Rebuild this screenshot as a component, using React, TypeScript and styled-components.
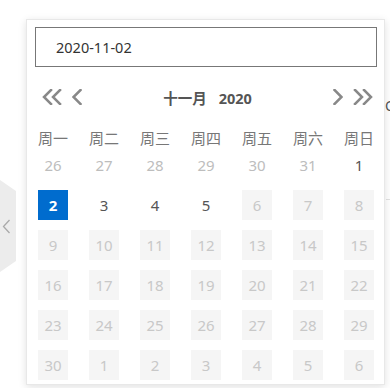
import React from 'react';
import styled, { createGlobalStyle } from 'styled-components';

const GlobalStyle = createGlobalStyle`
  html, body {
    margin: 0;
    padding: 0;
    background: #fff;
  }
  body {
    font-family: "Noto Sans", "Noto Sans CJK SC", sans-serif;
  }
`;

type DayKind = 'other' | 'normal' | 'selected' | 'disabled';

const weekDays = ['周一', '周二', '周三', '周四', '周五', '周六', '周日'];

const buildDays = () => {
  const days: { label: number; kind: DayKind }[] = [];
  [26, 27, 28, 29, 30, 31].forEach((d) => days.push({ label: d, kind: 'other' }));
  days.push({ label: 1, kind: 'normal' });
  days.push({ label: 2, kind: 'selected' });
  [3, 4, 5].forEach((d) => days.push({ label: d, kind: 'normal' }));
  for (let d = 6; d <= 30; d++) days.push({ label: d, kind: 'disabled' });
  for (let d = 1; d <= 6; d++) days.push({ label: d, kind: 'disabled' });
  return days;
};

const Chevron = ({ dir, double }: { dir: 'left' | 'right'; double?: boolean }) => {
  const w = double ? 21 : 10;
  const paths =
    dir === 'left'
      ? double
        ? ['M9 1 L2 8 L9 15', 'M18 1 L11 8 L18 15']
        : ['M8.5 1 L1.5 8 L8.5 15']
      : double
      ? ['M3 1 L10 8 L3 15', 'M12 1 L19 8 L12 15']
      : ['M1.5 1 L8.5 8 L1.5 15'];
  return (
    <svg width={w} height={16} viewBox={`0 0 ${w} 16`} fill="none">
      {paths.map((d) => (
        <path key={d} d={d} stroke="#888" strokeWidth={2.5} strokeLinecap="square" />
      ))}
    </svg>
  );
};

const App = () => {
  const days = buildDays();

  return (
    <Page>
      <GlobalStyle />
      <Backdrop>
        <SideArrow>
          <svg width="9" height="15" viewBox="0 0 9 15" fill="none">
            <path d="M7.5 1 L1.5 7.5 L7.5 14" stroke="#a9a9a9" strokeWidth={1.3} />
          </svg>
        </SideArrow>
        <PeekText>O</PeekText>
        <PeekLine />
      </Backdrop>

      <Popup>
        <DateInput>2020-11-02</DateInput>
        <NavRow>
          <NavGroup>
            <NavButton>
              <Chevron dir="left" double />
            </NavButton>
            <NavButton>
              <Chevron dir="left" />
            </NavButton>
          </NavGroup>
          <MonthTitle>
            十一月<Year>2020</Year>
          </MonthTitle>
          <NavGroup>
            <NavButton>
              <Chevron dir="right" />
            </NavButton>
            <NavButton>
              <Chevron dir="right" double />
            </NavButton>
          </NavGroup>
        </NavRow>
        <WeekRow>
          {weekDays.map((w) => (
            <WeekDay key={w}>{w}</WeekDay>
          ))}
        </WeekRow>
        <DayGrid>
          {days.map((d, i) => (
            <DayCell key={i} kind={d.kind}>
              {d.label}
            </DayCell>
          ))}
        </DayGrid>
      </Popup>
    </Page>
  );
};

const Page = styled.div`
  position: relative;
  width: 390px;
  height: 388px;
  overflow: hidden;
  background: #fff;
`;

const Backdrop = styled.div`
  position: absolute;
  inset: 0;
`;

const SideArrow = styled.div`
  position: absolute;
  left: 0;
  top: 180px;
  width: 16px;
  height: 92px;
  background: #ececec;
  clip-path: polygon(0 0, 0 100%, 100% 88%, 100% 12%);
  display: flex;
  align-items: center;
  justify-content: flex-start;
  padding-left: 2px;
  box-sizing: border-box;
`;

const PeekText = styled.span`
  position: absolute;
  left: 385px;
  top: 96px;
  font-size: 14px;
  color: #555;
`;

const PeekLine = styled.div`
  position: absolute;
  left: 386px;
  top: 199px;
  width: 10px;
  height: 1px;
  background: #e2e2e2;
`;

const Popup = styled.div`
  position: absolute;
  left: 26px;
  top: 19px;
  width: 359px;
  height: 366px;
  box-sizing: border-box;
  background: #fff;
  border: 1px solid #e8e8e8;
  box-shadow: 0 2px 8px rgba(0, 0, 0, 0.12);
  padding: 7px 7px 0 8px;
  display: flex;
  flex-direction: column;
`;

const DateInput = styled.div`
  height: 40px;
  flex: none;
  box-sizing: border-box;
  border: 1px solid #777;
  padding-left: 20px;
  display: flex;
  align-items: center;
  font-size: 14.5px;
  color: #333;
`;

const NavRow = styled.div`
  height: 50px;
  flex: none;
  margin-top: 5px;
  display: flex;
  align-items: center;
  justify-content: space-between;
  padding: 0 4px 0 7px;
`;

const NavGroup = styled.div`
  display: flex;
  align-items: center;
  gap: 9px;
`;

const NavButton = styled.span`
  display: flex;
  align-items: center;
  cursor: pointer;
`;

const MonthTitle = styled.div`
  font-size: 14.5px;
  font-weight: 700;
  color: #555;
`;

const Year = styled.span`
  margin-left: 12px;
`;

const WeekRow = styled.div`
  display: grid;
  grid-template-columns: repeat(7, 30px);
  column-gap: 21px;
  height: 30px;
  flex: none;
  padding-left: 3px;
`;

const WeekDay = styled.div`
  display: flex;
  align-items: center;
  justify-content: center;
  font-size: 15px;
  color: #777;
  white-space: nowrap;
`;

const DayGrid = styled.div`
  display: grid;
  grid-template-columns: repeat(7, 30px);
  grid-auto-rows: 30px;
  column-gap: 21px;
  row-gap: 10px;
  padding-left: 3px;
  margin-top: -2px;
`;

const dayColors: Record<DayKind, { bg: string; fg: string; weight: number }> = {
  other: { bg: 'transparent', fg: '#bdbdbd', weight: 400 },
  normal: { bg: 'transparent', fg: '#555', weight: 400 },
  selected: { bg: '#006cce', fg: '#fff', weight: 700 },
  disabled: { bg: '#f5f5f5', fg: '#c8c8c8', weight: 400 },
};

const DayCell = styled.div<{ kind: DayKind }>`
  display: flex;
  align-items: center;
  justify-content: center;
  font-size: 15px;
  background: ${({ kind }) => dayColors[kind].bg};
  color: ${({ kind }) => dayColors[kind].fg};
  font-weight: ${({ kind }) => dayColors[kind].weight};
`;

export default App;
